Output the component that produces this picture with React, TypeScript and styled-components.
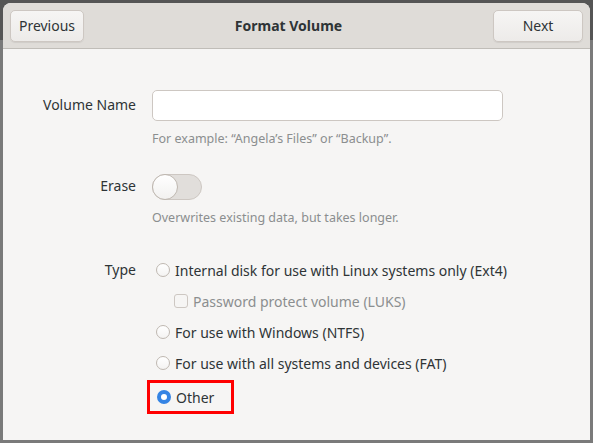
import styled, { createGlobalStyle } from "styled-components";

const Global = createGlobalStyle`
  body {
    margin: 0;
    background: #8a8a8a;
    font-family: "Noto Sans", "DejaVu Sans", sans-serif;
    color: #2e3436;
  }
`;

const Screen = styled.div`
  width: 593px;
  height: 443px;
  padding: 3px 3px 3px 3px;
  box-sizing: border-box;
  background: linear-gradient(#555 0 40px, #7a7a7a 40px);
`;

const Window = styled.div`
  height: 437px;
  background: #f6f5f4;
  border-radius: 8px 8px 0 0;
  overflow: hidden;
  display: flex;
  flex-direction: column;
`;

const HeaderBar = styled.header`
  height: 45px;
  flex: none;
  display: flex;
  align-items: center;
  justify-content: space-between;
  padding: 0 7px;
  background: #dfdcd8;
  border-bottom: 1px solid #c0bdb8;
`;

const Title = styled.div`
  font-weight: bold;
  font-size: 14px;
`;

const HeaderButton = styled.button<{ $width: number }>`
  height: 32px;
  width: ${(p) => p.$width}px;
  padding: 0;
  font: inherit;
  font-size: 14px;
  color: #2e3436;
  background: linear-gradient(#f6f5f4, #edebe9);
  border: 1px solid #cdc7c2;
  border-radius: 5px;
  box-shadow: 0 1px 1px rgba(0, 0, 0, 0.07);
`;

const Body = styled.div`
  display: grid;
  grid-template-columns: 133px 1fr;
  column-gap: 16px;
  padding: 41px 0 0 0;
  font-size: 14px;
`;

const Label = styled.div<{ $top: number }>`
  text-align: right;
  padding-top: ${(p) => p.$top}px;
`;

const Field = styled.div<{ $gap: number }>`
  display: flex;
  flex-direction: column;
  margin-bottom: ${(p) => p.$gap}px;
`;

const Entry = styled.input`
  width: 351px;
  height: 31px;
  box-sizing: border-box;
  border: 1px solid #cdc7c2;
  border-radius: 5px;
  background: #fff;
`;

const Hint = styled.div`
  margin-top: 9px;
  font-size: 12.5px;
  color: #8b8e8f;
`;

const Switch = styled.div`
  width: 50px;
  height: 26px;
  box-sizing: border-box;
  border: 1px solid #cdc7c2;
  border-radius: 13px;
  background: #e1dedb;
  position: relative;
`;

const Knob = styled.div`
  position: absolute;
  left: -1px;
  top: -1px;
  width: 26px;
  height: 26px;
  box-sizing: border-box;
  border-radius: 50%;
  border: 1px solid #bfb8b1;
  background: linear-gradient(#fff, #f2f1f0);
`;

const Options = styled.div`
  display: flex;
  flex-direction: column;
  gap: 9px;
  padding-left: 4px;
`;

const Option = styled.div<{ $indent?: boolean; $dim?: boolean }>`
  display: flex;
  align-items: center;
  gap: 5px;
  height: 22px;
  margin-left: ${(p) => (p.$indent ? 18 : 0)}px;
  color: ${(p) => (p.$dim ? "#8b8e8f" : "#2e3436")};
`;

const Radio = styled.span<{ $on?: boolean }>`
  width: 14px;
  height: 14px;
  border-radius: 50%;
  box-sizing: border-box;
  background: ${(p) => (p.$on ? "#fff" : "linear-gradient(#fff,#f4f3f2)")};
  border: ${(p) => (p.$on ? "4px solid #3584e4" : "1px solid #bfb8b1")};
`;

const Check = styled.span`
  width: 14px;
  height: 14px;
  border-radius: 3px;
  box-sizing: border-box;
  border: 1px solid #cdc7c2;
  background: #f6f5f4;
`;

const Highlight = styled.div`
  align-self: flex-start;
  margin: -3px 0 0 -9px;
  padding: 3px 17px 3px 7px;
  border: 3px solid #ff0000;
`;

export default function App() {
  return (
    <>
      <Global />
      <Screen>
        <Window>
          <HeaderBar>
            <HeaderButton $width={74}>Previous</HeaderButton>
            <Title>Format Volume</Title>
            <HeaderButton $width={90}>Next</HeaderButton>
          </HeaderBar>
          <Body>
            <Label $top={5}>Volume Name</Label>
            <Field $gap={27}>
              <Entry />
              <Hint>For example: “Angela’s Files” or “Backup”.</Hint>
            </Field>
            <Label $top={2}>Erase</Label>
            <Field $gap={33}>
              <Switch>
                <Knob />
              </Switch>
              <Hint>Overwrites existing data, but takes longer.</Hint>
            </Field>
            <Label $top={1}>Type</Label>
            <Options>
              <Option>
                <Radio />
                Internal disk for use with Linux systems only (Ext4)
              </Option>
              <Option $indent $dim>
                <Check />
                Password protect volume (LUKS)
              </Option>
              <Option>
                <Radio />
                For use with Windows (NTFS)
              </Option>
              <Option>
                <Radio />
                For use with all systems and devices (FAT)
              </Option>
              <Highlight>
                <Option>
                  <Radio $on />
                  Other
                </Option>
              </Highlight>
            </Options>
          </Body>
        </Window>
      </Screen>
    </>
  );
}
